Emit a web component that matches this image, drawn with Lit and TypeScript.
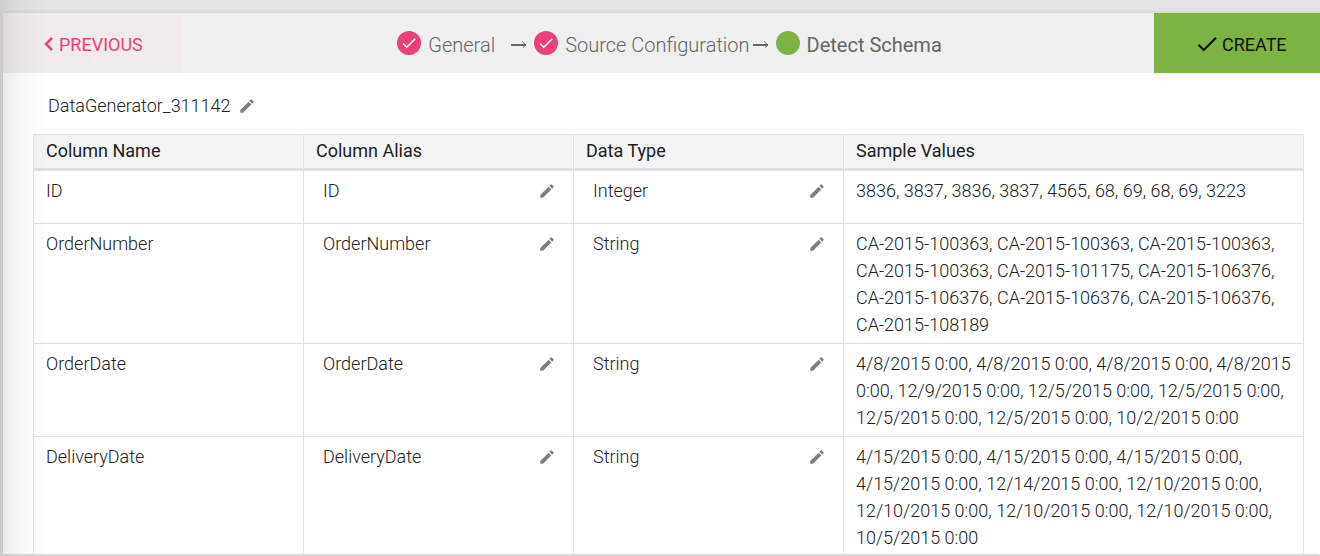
import { LitElement, html, css, svg } from "lit";
import { customElement, property, state } from "lit/decorators.js";

interface Column {
  name: string;
  type: string;
  samples: string;
}

const COLUMNS: Column[] = [
  { name: "ID", type: "Integer", samples: "3836, 3837, 3836, 3837, 4565, 68, 69, 68, 69, 3223" },
  {
    name: "OrderNumber",
    type: "String",
    samples:
      "CA-2015-100363, CA-2015-100363, CA-2015-100363, CA-2015-100363, CA-2015-101175, CA-2015-106376, CA-2015-106376, CA-2015-106376, CA-2015-106376, CA-2015-108189",
  },
  {
    name: "OrderDate",
    type: "String",
    samples:
      "4/8/2015 0:00, 4/8/2015 0:00, 4/8/2015 0:00, 4/8/2015 0:00, 12/9/2015 0:00, 12/5/2015 0:00, 12/5/2015 0:00, 12/5/2015 0:00, 12/5/2015 0:00, 10/2/2015 0:00",
  },
  {
    name: "DeliveryDate",
    type: "String",
    samples:
      "4/15/2015 0:00, 4/15/2015 0:00, 4/15/2015 0:00, 4/15/2015 0:00, 12/14/2015 0:00, 12/10/2015 0:00, 12/10/2015 0:00, 12/10/2015 0:00, 12/10/2015 0:00, 10/5/2015 0:00",
  },
];

const tick = svg`<path d="M9 16.17 4.83 12l-1.42 1.41L9 19 21 7l-1.41-1.41z"></path>`;

@customElement("edit-button")
export class EditButton extends LitElement {
  static styles = css`
    :host {
      display: inline-flex;
    }
    .edit {
      display: flex;
      align-items: center;
      justify-content: center;
      width: 28px;
      height: 27px;
      padding: 0;
      border: 0;
      background: none;
      cursor: pointer;
    }
    .glyph {
      width: 18px;
      height: 18px;
      fill: #808080;
    }
  `;

  @property() label = "";

  render() {
    return html`<button class="edit" type="button" aria-label=${this.label}>
      <svg class="glyph" viewBox="0 0 24 24" aria-hidden="true">
        <path
          d="M3 17.25V21h3.75L17.81 9.94l-3.75-3.75L3 17.25zM20.71 7.04c.39-.39.39-1.02 0-1.41l-2.34-2.34a.9959.9959 0 0 0-1.41 0l-1.83 1.83 3.75 3.75 1.83-1.83z"
        ></path>
      </svg>
    </button>`;
  }
}

@customElement("app-root")
export class AppRoot extends LitElement {
  static styles = css`
    * {
      box-sizing: border-box;
    }
    :host {
      display: flex;
      position: relative;
      box-sizing: border-box;
      height: 100vh;
      padding: 13px 0 2px 3px;
      background: #e3e3e3;
      color: #212121;
      font: 300 18px/27px Roboto, sans-serif;
    }
    .edge {
      position: absolute;
      inset: 0 auto 0 0;
      width: 48px;
      background: linear-gradient(to right, rgba(0, 0, 0, 0.09), rgba(0, 0, 0, 0.03) 40%, rgba(0, 0, 0, 0));
      pointer-events: none;
    }
    .card {
      display: flex;
      flex: 1;
      flex-direction: column;
      min-width: 0;
      background: #fff;
      box-shadow: 0 0 4px rgba(0, 0, 0, 0.12);
    }
    .bar {
      display: flex;
      flex: none;
      justify-content: space-between;
      height: 60px;
      background: #f0f0f0;
    }
    .action {
      display: flex;
      align-items: center;
      padding: 2px 0 0;
      border: 0;
      font: 400 18px/27px Roboto, sans-serif;
      cursor: pointer;
    }
    .previous {
      width: 180px;
      padding-left: 40px;
      background: #f0ebec;
      color: #ec407a;
    }
    .create {
      width: 166px;
      padding-left: 40px;
      background: #7cb342;
      color: #111;
    }
    .chevron {
      width: 12px;
      height: 14px;
      margin-right: 4px;
      fill: none;
      stroke: currentColor;
      stroke-width: 2.5;
    }
    .create-tick {
      width: 26px;
      height: 26px;
      margin-right: 2px;
      fill: currentColor;
    }
    .steps {
      display: flex;
      align-items: center;
      margin: 0;
      padding: 0 0 0 2px;
      list-style: none;
      color: #666;
      font-size: 20px;
    }
    .step {
      display: flex;
      align-items: center;
    }
    .dot {
      display: flex;
      align-items: center;
      justify-content: center;
      width: 24px;
      height: 24px;
      margin-right: 7px;
      border-radius: 50%;
      background: #ec407a;
    }
    .dot-tick {
      width: 18px;
      height: 18px;
      fill: #fff;
    }
    .title {
      padding-top: 4px;
    }
    .arrow {
      width: 16px;
      height: 8px;
      margin: 4px 7px 0 3px;
      fill: none;
      stroke: #666;
    }
    .shaft {
      stroke-width: 2;
    }
    .first .arrow {
      margin-left: 16px;
    }
    .current .dot {
      background: #7cb342;
    }
    .current .title {
      font-weight: 400;
    }
    .body {
      flex: 1;
      min-height: 0;
      padding: 19px 16px 0 30px;
      overflow: auto;
      scrollbar-width: none;
    }
    .source {
      display: flex;
      align-items: center;
      gap: 2px;
      margin: 0 0 15px 15px;
      font-size: 18px;
      font-weight: 300;
    }
    .schema {
      width: 100%;
      table-layout: fixed;
      border-collapse: separate;
      border-spacing: 0;
      border: solid #dee2e6;
      border-width: 1px 0 0 1px;
    }
    .field {
      width: 270px;
    }
    .head {
      padding: 2px 12px 4px;
      border: solid #dee2e6;
      border-width: 0 1px 3px 0;
      background: #f4f4f4;
      font-weight: 400;
      text-align: left;
    }
    .cell {
      height: 53px;
      padding: 6px 12px 5px;
      border: solid #dee2e6;
      border-width: 0 1px 1px 0;
      vertical-align: top;
    }
    .editable {
      display: flex;
      justify-content: space-between;
      padding-left: 7px;
    }
  `;

  @state() private columns = COLUMNS;

  private renderStep(title: string, kind: string) {
    const current = kind === "current";
    return html`<li class="step ${kind}" aria-current=${current ? "step" : "false"}>
      <span class="dot"
        >${current ? "" : html`<svg class="dot-tick" viewBox="0 0 24 24" aria-hidden="true">${tick}</svg>`}</span
      >
      <span class="title">${title}</span>
      ${current
        ? ""
        : html`<svg class="arrow" viewBox="0 0 16 8" aria-hidden="true">
            <path class="shaft" d="M0 4h15"></path>
            <path d="M11 .5 15 4l-3 2.5"></path>
          </svg>`}
    </li>`;
  }

  private renderEditable(text: string, label: string) {
    return html`<td class="cell">
      <div class="editable"><span>${text}</span><edit-button label=${label}></edit-button></div>
    </td>`;
  }

  render() {
    return html`
      <main class="card">
        <header class="bar">
          <button class="action previous" type="button">
            <svg class="chevron" viewBox="0 0 12 14" aria-hidden="true"><path d="M9 1 3 7l6 6"></path></svg>PREVIOUS
          </button>
          <ol class="steps">
            ${this.renderStep("General", "first")} ${this.renderStep("Source Configuration", "")}
            ${this.renderStep("Detect Schema", "current")}
          </ol>
          <button class="action create" type="button">
            <svg class="create-tick" viewBox="0 0 24 24" aria-hidden="true">${tick}</svg>CREATE
          </button>
        </header>
        <section class="body">
          <h1 class="source">DataGenerator_311142<edit-button label="Rename source"></edit-button></h1>
          <table class="schema">
            <colgroup>
              <col class="field" />
              <col class="field" />
              <col class="field" />
              <col />
            </colgroup>
            <thead>
              <tr>
                ${["Column Name", "Column Alias", "Data Type", "Sample Values"].map(
                  (h) => html`<th class="head" scope="col">${h}</th>`
                )}
              </tr>
            </thead>
            <tbody>
              ${this.columns.map(
                (c) => html`<tr>
                  <td class="cell">${c.name}</td>
                  ${this.renderEditable(c.name, `Edit alias of ${c.name}`)}
                  ${this.renderEditable(c.type, `Edit type of ${c.name}`)}
                  <td class="cell">${c.samples}</td>
                </tr>`
              )}
            </tbody>
          </table>
        </section>
      </main>
      <div class="edge"></div>
    `;
  }
}
